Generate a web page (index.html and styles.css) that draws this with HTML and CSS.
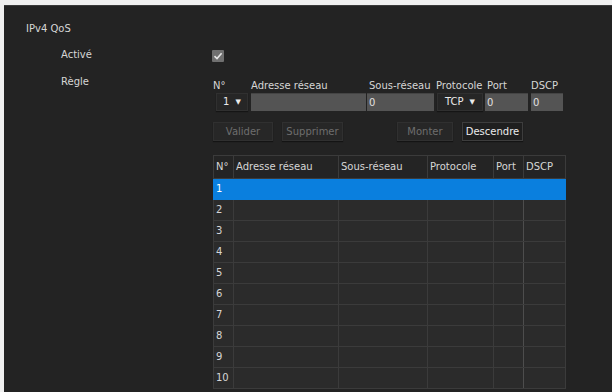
FILE: index.html
```html
<!DOCTYPE html>
<html lang="fr">
<head>
<meta charset="UTF-8" />
<meta name="viewport" content="width=device-width, initial-scale=1" />
<title>IPv4 QoS</title>
<link rel="stylesheet" href="styles.css">
</head>
<body>
  <div class="panel">
    <h2 class="title">IPv4 QoS</h2>
    <div class="settings">
      <div class="label activated">Activé</div>
      <div class="value activated">
        <span class="checkbox">
          <svg width="12" height="12" viewBox="0 0 12 12"><path d="M2.5 6.2 L5 8.6 L9.6 3.2" fill="none" stroke="#e6e6e6" stroke-width="1.6"/></svg>
        </span>
      </div>

      <div class="label">Règle</div>
      <div class="value editor">
        <div class="fields">
          <div class="field f-no">
            <span class="field-label">N°</span>
            <div class="select small"><span>1</span><span class="arrow">▼</span></div>
          </div>
          <div class="field f-addr">
            <span class="field-label">Adresse réseau</span>
            <div class="input wide"></div>
          </div>
          <div class="field f-mask">
            <span class="field-label">Sous-réseau</span>
            <div class="input mask">0</div>
          </div>
          <div class="field f-proto">
            <span class="field-label">Protocole</span>
            <div class="select proto"><span>TCP</span><span class="arrow">▼</span></div>
          </div>
          <div class="field f-port">
            <span class="field-label">Port</span>
            <div class="input port">0</div>
          </div>
          <div class="field f-dscp">
            <span class="field-label">DSCP</span>
            <div class="input dscp">0</div>
          </div>
        </div>

        <div class="buttons">
          <button class="btn" disabled>Valider</button>
          <button class="btn" disabled>Supprimer</button>
          <button class="btn move" disabled>Monter</button>
          <button class="btn active">Descendre</button>
        </div>

        <table class="rules">
          <colgroup>
            <col style="width:20px">
            <col style="width:105px">
            <col style="width:89px">
            <col style="width:66px">
            <col style="width:30px">
            <col style="width:42px">
          </colgroup>
          <thead>
            <tr>
              <th>N°</th>
              <th>Adresse réseau</th>
              <th>Sous-réseau</th>
              <th>Protocole</th>
              <th>Port</th>
              <th>DSCP</th>
            </tr>
          </thead>
          <tbody>
            <tr class="selected"><td>1</td><td></td><td></td><td></td><td></td><td></td></tr>
            <tr><td>2</td><td></td><td></td><td></td><td></td><td></td></tr>
            <tr><td>3</td><td></td><td></td><td></td><td></td><td></td></tr>
            <tr><td>4</td><td></td><td></td><td></td><td></td><td></td></tr>
            <tr><td>5</td><td></td><td></td><td></td><td></td><td></td></tr>
            <tr><td>6</td><td></td><td></td><td></td><td></td><td></td></tr>
            <tr><td>7</td><td></td><td></td><td></td><td></td><td></td></tr>
            <tr><td>8</td><td></td><td></td><td></td><td></td><td></td></tr>
            <tr><td>9</td><td></td><td></td><td></td><td></td><td></td></tr>
            <tr><td>10</td><td></td><td></td><td></td><td></td><td></td></tr>
          </tbody>
        </table>
      </div>
    </div>
  </div>
</body>
</html>
```

FILE: styles.css
```css
:root {
  --page-bg: #f0f0f0;
  --panel-bg: #232323;
  --text: #d6d6d6;
  --dim-text: #6e6e6e;
  --input-bg: #545454;
  --table-bg: #2b2b2b;
  --line: #3b3b3b;
  --selected: #0a7fde;
}
html, body {
  margin: 0;
  height: 100%;
}
body {
  background: var(--page-bg);
  font-family: 'DejaVu Sans', Verdana, sans-serif;
  font-size: 10px;
  line-height: 12px;
  color: var(--text);
  overflow: hidden;
}
.panel {
  margin: 5px 0 0 4px;
  height: 387px;
  background: var(--panel-bg);
  border-top: 1px solid #3a3a3a;
  box-sizing: border-box;
  padding: 17px 0 0 22px;
}
.title {
  margin: 0;
  font-size: 10px;
  font-weight: normal;
  line-height: 12px;
}
.settings {
  display: grid;
  grid-template-columns: 151px auto;
  margin: 14px 0 0 35px;
  row-gap: 15px;
}
.label {
  line-height: 12px;
}
.value.activated {
  height: 12px;
}
.checkbox {
  display: block;
  width: 12px;
  height: 12px;
  margin-top: 1px;
  background: #707070;
  border-radius: 1px;
}
.checkbox svg {
  display: block;
}
.editor {
  padding-top: 4px;
}
.fields {
  display: grid;
  grid-template-columns: 39px 116px 69px 49px 46px 32px;
}
.field {
  display: flex;
  flex-direction: column;
}
.field-label {
  display: block;
  height: 12px;
  white-space: nowrap;
  margin-bottom: 1px;
}
.f-no .field-label { padding-left: 1px; }
.f-mask .field-label { padding-left: 2px; }
.f-port .field-label { padding-left: 2px; }
.input {
  height: 18px;
  box-sizing: border-box;
  background: var(--input-bg);
  color: #e0e0e0;
  padding: 3px 0 0 2px;
  border-top: 1px solid #444;
}
.input.wide { width: 115px; }
.input.mask { width: 67px; }
.input.port { width: 43px; }
.input.dscp { width: 32px; }
.select {
  height: 18px;
  box-sizing: border-box;
  display: flex;
  align-items: center;
  justify-content: center;
  gap: 6px;
  background: #262626;
  border: 1px solid #303030;
  box-shadow: 0 1px 1px #151515;
  color: #eaeaea;
  font-size: 10px;
}
.select .arrow {
  font-size: 7px;
}
.select.small {
  width: 32px;
  margin-left: 4px;
}
.select.proto {
  width: 46px;
  margin-left: 1px;
}
.buttons {
  display: flex;
  gap: 9px;
  margin: 11px 0 0 1px;
}
.btn {
  height: 19px;
  padding: 0;
  font-family: inherit;
  font-size: 10px;
  background: #272727;
  border: 1px solid #303030;
  box-shadow: 0 1px 1px #141414;
  color: var(--dim-text);
}
.btn:nth-child(1) { width: 60px; }
.btn:nth-child(2) { width: 61px; }
.btn.move {
  width: 56px;
  margin-left: 45px;
}
.btn.active {
  width: 61px;
  color: #ececec;
  background: #1f1f1f;
  border-color: #3d3d3d;
}
.rules {
  margin: 14px 0 0 1px;
  width: 352px;
  table-layout: fixed;
  border-collapse: collapse;
  background: var(--table-bg);
}
.rules th,
.rules td {
  border: 1px solid var(--line);
  padding: 0 0 0 2px;
  text-align: left;
  font-weight: normal;
  white-space: nowrap;
  overflow: hidden;
}
.rules th {
  height: 22px;
  background: #242424;
}
.rules td {
  height: 20px;
}
.rules td:nth-child(5) {
  border-right-color: #4d4d4d;
}
.rules tr.selected td {
  background: var(--selected);
  border-color: var(--selected);
  color: #fff;
}
```
